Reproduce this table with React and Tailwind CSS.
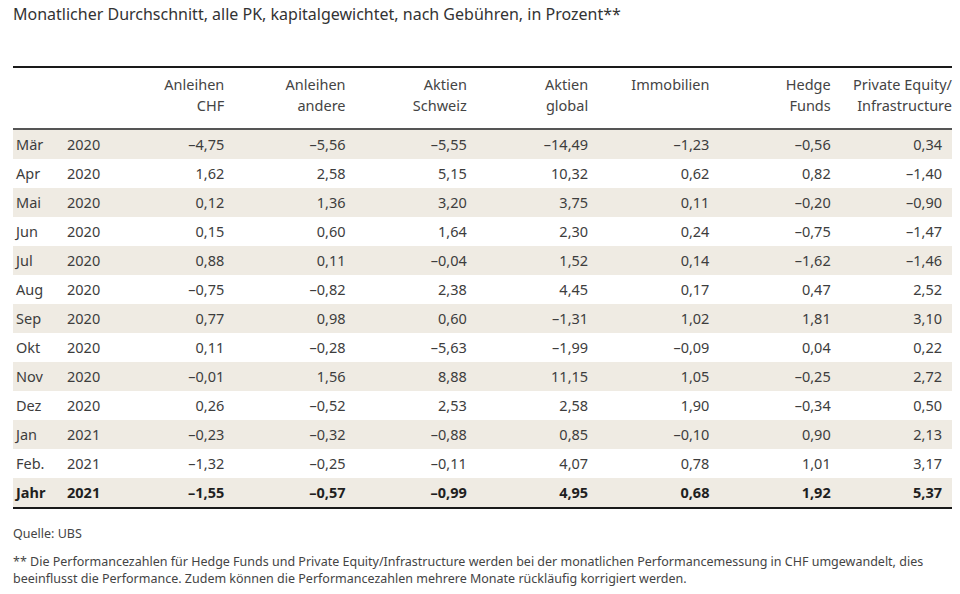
const rows = [
  ["Mär", "2020", "–4,75", "–5,56", "–5,55", "–14,49", "–1,23", "–0,56", "0,34"],
  ["Apr", "2020", "1,62", "2,58", "5,15", "10,32", "0,62", "0,82", "–1,40"],
  ["Mai", "2020", "0,12", "1,36", "3,20", "3,75", "0,11", "–0,20", "–0,90"],
  ["Jun", "2020", "0,15", "0,60", "1,64", "2,30", "0,24", "–0,75", "–1,47"],
  ["Jul", "2020", "0,88", "0,11", "–0,04", "1,52", "0,14", "–1,62", "–1,46"],
  ["Aug", "2020", "–0,75", "–0,82", "2,38", "4,45", "0,17", "0,47", "2,52"],
  ["Sep", "2020", "0,77", "0,98", "0,60", "–1,31", "1,02", "1,81", "3,10"],
  ["Okt", "2020", "0,11", "–0,28", "–5,63", "–1,99", "–0,09", "0,04", "0,22"],
  ["Nov", "2020", "–0,01", "1,56", "8,88", "11,15", "1,05", "–0,25", "2,72"],
  ["Dez", "2020", "0,26", "–0,52", "2,53", "2,58", "1,90", "–0,34", "0,50"],
  ["Jan", "2021", "–0,23", "–0,32", "–0,88", "0,85", "–0,10", "0,90", "2,13"],
  ["Feb.", "2021", "–1,32", "–0,25", "–0,11", "4,07", "0,78", "1,01", "3,17"],
];

const total = ["Jahr", "2021", "–1,55", "–0,57", "–0,99", "4,95", "0,68", "1,92", "5,37"];

const headers = [
  ["Anleihen", "CHF"],
  ["Anleihen", "andere"],
  ["Aktien", "Schweiz"],
  ["Aktien", "global"],
  ["Immobilien", ""],
  ["Hedge", "Funds"],
  ["Private Equity/", "Infrastructure"],
];

const grid = "grid grid-cols-[54px_36px_repeat(7,1fr)]";

function Row({ cells, shaded, bold }) {
  return (
    <div
      className={`${grid} h-[29px] items-center ${shaded ? "bg-[#efebe3]" : "bg-white"} ${
        bold ? "font-bold text-[#1f1f1f]" : "text-[#3d3d3d]"
      }`}
    >
      <div className="pl-[3px]">{cells[0]}</div>
      <div>{cells[1]}</div>
      {cells.slice(2).map((v, i) => (
        <div key={i} className={`text-right ${i === 6 ? "pr-[10px]" : ""}`}>
          {v}
        </div>
      ))}
    </div>
  );
}

export default function App() {
  return (
    <div
      className="w-[960px] h-[594px] bg-white text-[#333] overflow-hidden"
      style={{ fontFamily: "'Noto Sans', 'Open Sans', sans-serif" }}
    >
      <div className="pl-[13px] pt-[3px] text-[16px] leading-[22px] text-[#333]">
        Monatlicher Durchschnitt, alle PK, kapitalgewichtet, nach Gebühren, in Prozent**
      </div>

      <div className="ml-[13px] mr-[8px] mt-[41px] text-[14.5px]">
        {/* header */}
        <div className={`${grid} h-[64px] border-t-2 border-b-2 border-t-[#1a1a1a] border-b-[#555] pt-[6px] text-[#444] leading-[21px]`}>
          <div />
          <div />
          {headers.map(([a, b], i) => (
            <div key={i} className="text-right">
              <div>{a}</div>
              <div>{b}</div>
            </div>
          ))}
        </div>

        {rows.map((r, i) => (
          <Row key={i} cells={r} shaded={i % 2 === 0} />
        ))}
        <Row cells={total} shaded bold />
        <div className="h-[2px] bg-[#1a1a1a]" />
      </div>

      <div className="pl-[13px] mt-[16px] text-[12.5px] text-[#444] leading-[17px]">
        <div>Quelle: UBS</div>
        <div className="mt-[11px]">
          ** Die Performancezahlen für Hedge Funds und Private Equity/Infrastructure werden bei der monatlichen Performancemessung in CHF umgewandelt, dies
          <br />
          beeinflusst die Performance. Zudem können die Performancezahlen mehrere Monate rückläufig korrigiert werden.
        </div>
      </div>
    </div>
  );
}
